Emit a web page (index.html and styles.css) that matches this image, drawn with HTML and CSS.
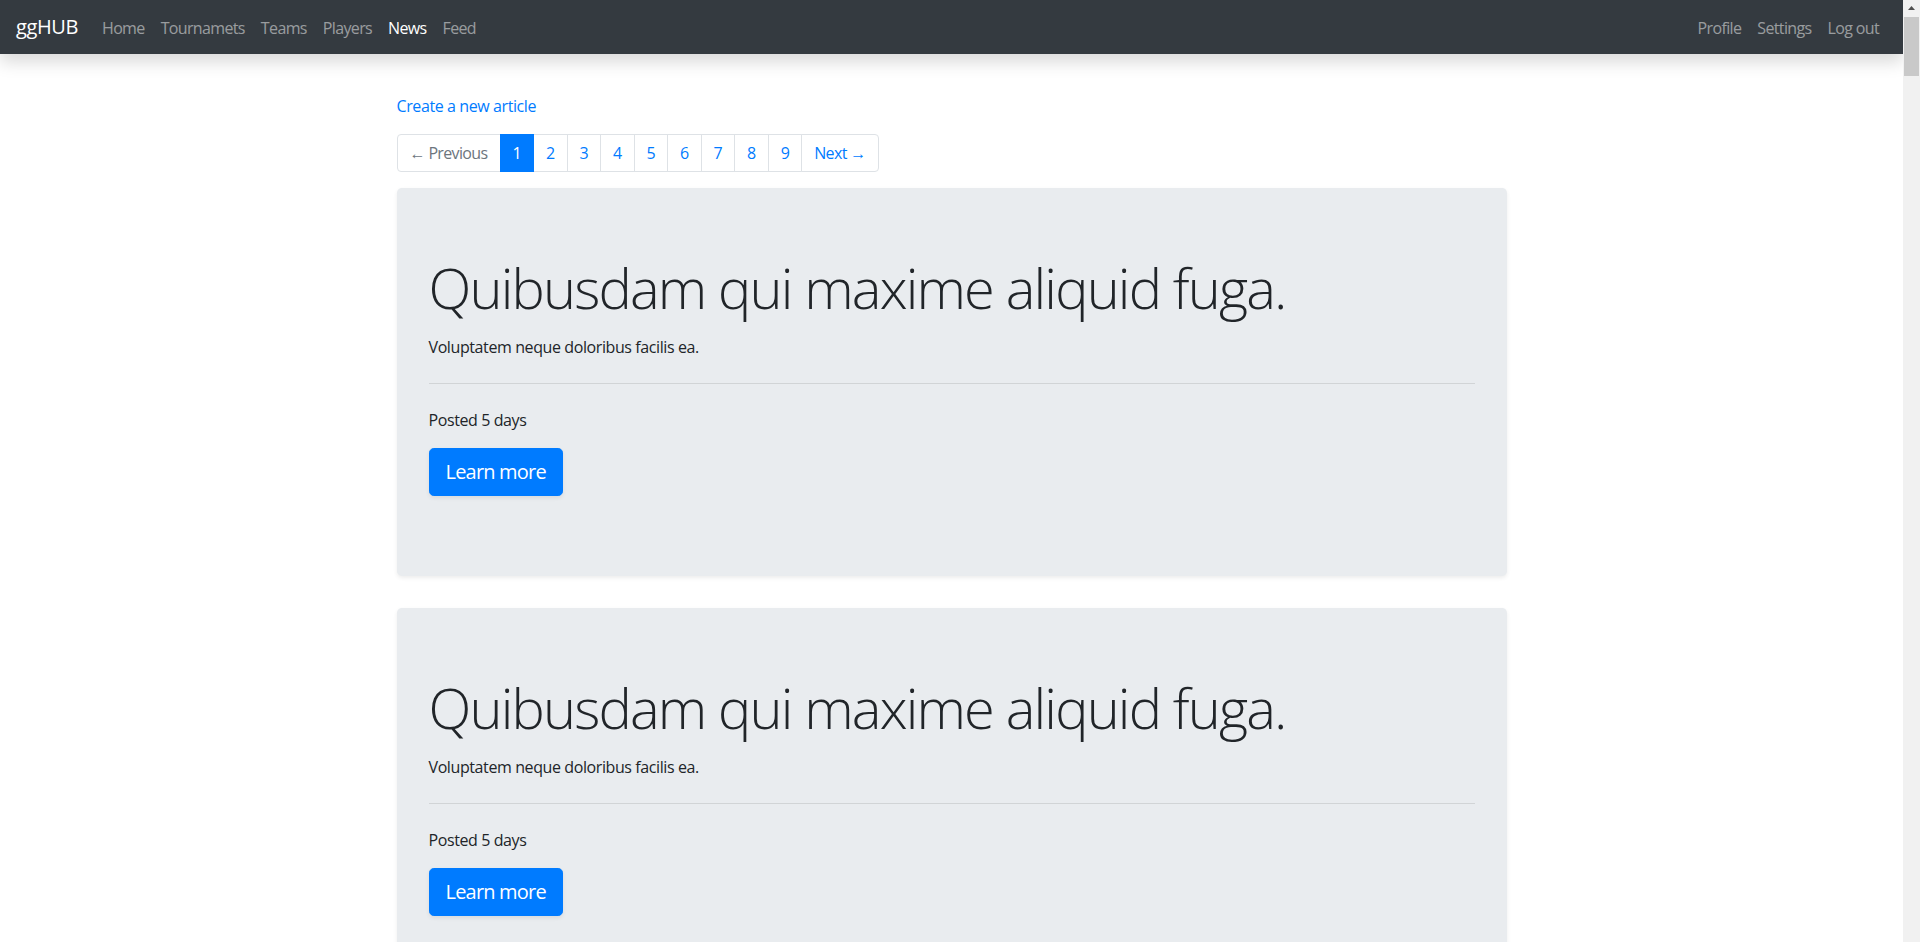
FILE: index.html
```html
<!DOCTYPE html>
<html lang="en">
<head>
<meta charset="utf-8">
<title>ggHUB - News</title>
<link rel="stylesheet" href="styles.css">
</head>
<body>
<nav class="navbar">
  <div class="nav-left">
    <a class="brand" href="#">ggHUB</a>
    <ul class="nav">
      <li><a class="nav-link" href="#">Home</a></li>
      <li><a class="nav-link" href="#">Tournamets</a></li>
      <li><a class="nav-link" href="#">Teams</a></li>
      <li><a class="nav-link" href="#">Players</a></li>
      <li><a class="nav-link active" href="#">News</a></li>
      <li><a class="nav-link" href="#">Feed</a></li>
    </ul>
  </div>
  <ul class="nav">
    <li><a class="nav-link" href="#">Profile</a></li>
    <li><a class="nav-link" href="#">Settings</a></li>
    <li><a class="nav-link" href="#">Log out</a></li>
  </ul>
</nav>

<main class="container">
  <p class="create"><a href="#">Create a new article</a></p>

  <ul class="pagination">
    <li class="page-item disabled"><span class="page-link">&larr; Previous</span></li>
    <li class="page-item active"><span class="page-link">1</span></li>
    <li class="page-item"><a class="page-link" href="#">2</a></li>
    <li class="page-item"><a class="page-link" href="#">3</a></li>
    <li class="page-item"><a class="page-link" href="#">4</a></li>
    <li class="page-item"><a class="page-link" href="#">5</a></li>
    <li class="page-item"><a class="page-link" href="#">6</a></li>
    <li class="page-item"><a class="page-link" href="#">7</a></li>
    <li class="page-item"><a class="page-link" href="#">8</a></li>
    <li class="page-item"><a class="page-link" href="#">9</a></li>
    <li class="page-item"><a class="page-link" href="#">Next &rarr;</a></li>
  </ul>

  <article class="jumbotron">
    <h1 class="display">Quibusdam qui maxime aliquid fuga.</h1>
    <p class="summary">Voluptatem neque doloribus facilis ea.</p>
    <hr class="divider">
    <p class="posted">Posted 5 days</p>
    <p class="actions"><a class="btn" href="#">Learn more</a></p>
  </article>

  <article class="jumbotron">
    <h1 class="display">Quibusdam qui maxime aliquid fuga.</h1>
    <p class="summary">Voluptatem neque doloribus facilis ea.</p>
    <hr class="divider">
    <p class="posted">Posted 5 days</p>
    <p class="actions"><a class="btn" href="#">Learn more</a></p>
  </article>
</main>

<div class="scrollbar" aria-hidden="true">
  <svg class="arrow" width="17" height="17" viewBox="0 0 17 17"><polygon points="5,10 8.5,6 12,10" fill="#505050"/></svg>
  <div class="thumb"></div>
</div>
</body>
</html>
```

FILE: styles.css
```css
* {
  box-sizing: border-box;
}

body {
  margin: 0 17px 0 0;
  font-family: "Open Sans", "Noto Sans", "Liberation Sans", sans-serif;
  font-size: 16px;
  line-height: 1.5;
  letter-spacing: -0.025em;
  color: #212529;
  background: #fff;
}

a {
  color: #007bff;
  text-decoration: none;
}

/* Navbar */
.navbar {
  position: relative;
  z-index: 2;
  display: flex;
  align-items: center;
  justify-content: space-between;
  height: 54px;
  padding: 0 16px;
  background: #343a40;
  box-shadow: 0 8px 16px rgba(0, 0, 0, 0.15);
}

.nav-left {
  display: flex;
  align-items: center;
}

.brand {
  margin-right: 16px;
  font-size: 20px;
  line-height: 30px;
  letter-spacing: -0.02em;
  color: #fff;
}

.nav {
  display: flex;
  margin: 0;
  padding: 0;
  list-style: none;
}

.nav-link {
  display: block;
  padding: 9px 8px 7px;
  letter-spacing: -0.04em;
  color: rgba(255, 255, 255, 0.5);
}

.nav-link.active {
  color: #fff;
}

/* Main */
.container {
  max-width: 1140px;
  margin: 0 auto;
  padding: 40px 15px 0;
}

.create {
  margin: 0 0 16px;
}

.pagination {
  display: flex;
  margin: 0 0 16px;
  padding: 0;
  list-style: none;
  letter-spacing: -0.04em;
}

.page-link {
  display: block;
  margin-left: -1px;
  padding: 8px 12px;
  line-height: 20px;
  color: #007bff;
  background: #fff;
  border: 1px solid #dee2e6;
}

.page-item:first-child .page-link {
  margin-left: 0;
  border-radius: 4px 0 0 4px;
}

.page-item:last-child .page-link {
  border-radius: 0 4px 4px 0;
}

.page-item.active .page-link {
  position: relative;
  z-index: 1;
  color: #fff;
  background: #007bff;
  border-color: #007bff;
}

.page-item.disabled .page-link {
  color: #6c757d;
}

/* Article card */
.jumbotron {
  margin-bottom: 32px;
  padding: 64px 32px;
  background: #e9ecef;
  border-radius: 4.8px;
  box-shadow: 0 2px 4px rgba(0, 0, 0, 0.075);
}

.display {
  margin: 0 0 14px;
  padding-top: 2px;
  font-size: 56px;
  font-weight: 300;
  line-height: 1.2;
  letter-spacing: -0.033em;
}

.summary {
  margin: 0;
}

.divider {
  margin: 24px 0;
  border: 0;
  border-top: 1px solid rgba(0, 0, 0, 0.1);
}

.posted {
  margin: 0 0 16px;
}

.actions {
  margin: 0 0 16px;
  font-size: 20px;
  line-height: 30px;
}

.btn {
  display: inline-block;
  padding: 8px 16px;
  font-size: 20px;
  line-height: 30px;
  letter-spacing: -0.04em;
  color: #fff;
  background: #007bff;
  border: 1px solid #007bff;
  border-radius: 4.8px;
  box-shadow: 0 2px 4px rgba(0, 0, 0, 0.075);
}

/* Faux window scrollbar (overlay on the right edge) */
.scrollbar {
  position: fixed;
  top: 0;
  right: 0;
  width: 17px;
  height: 100vh;
  background: #f1f1f1;
}

.arrow {
  display: block;
}

.thumb {
  width: 15px;
  height: 59px;
  margin-left: 1px;
  background: #c9c9c9;
}
```
